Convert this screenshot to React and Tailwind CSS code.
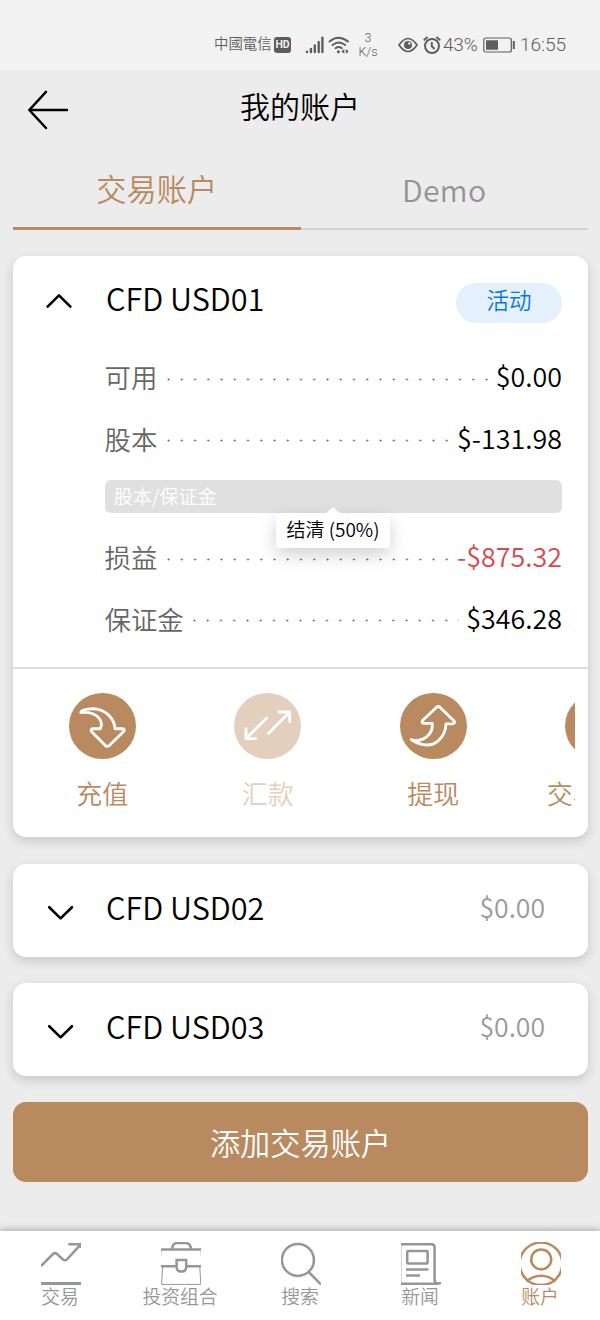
import React, { useState } from "react";

const rows = [
  { label: "可用", value: "$0.00", height: "h-[62px]" },
  { label: "股本", value: "$-131.98", height: "h-[61px]" },
];

const marginRows = [
  { label: "损益", value: "-$875.32", height: "h-[62px]", negative: true },
  { label: "保证金", value: "$346.28", height: "h-[61px]" },
];

const actions = [
  {
    label: "充值",
    icon: (
      <path d="M11.4 19.8C11.4 16.6 24 14.8 30 17C39 19.6 45.6 27 46.2 36.3H53.8Q56.6 36.6 55 39L40.4 53.4Q38.4 55 36.4 53.4L22.3 39Q21 36.6 23.5 36.3H31.2C34.6 29.5 30 18.5 11.4 19.8Z" />
    ),
  },
  {
    label: "汇款",
    disabled: true,
    icon: (
      <path d="M32.7 25.3L11.7 46.3M11.7 36.3V46.3H21.7M34.3 41L56 19.3M45 19.3H56V29.3" />
    ),
  },
  {
    label: "提现",
    icon: (
      <path d="M10.9 47.2C22 50.8 33.4 42.4 32.3 30.9H24Q20.6 30.4 22.4 28L36.6 14.4Q38.3 13 40 14.4L54.4 28.4Q56 30.8 52.8 31.3H46.2C45.8 45.2 34.4 56.6 19 51.4C15.4 50.2 12.6 48.8 10.9 47.2Z" />
    ),
  },
  {
    label: "交易记录",
    icon: <path d="M14 24H52M14 33H52M14 42H52" />,
  },
];

const navItems = [
  {
    label: "交易",
    icon: (
      <>
        <path d="M0 24L12 12Q14 10 16 12L22 17.5Q24 19.2 26 17.3L39.6 2.6" />
        <path d="M27.3 2.3H40V6" />
        <path d="M0 41.5H40" strokeWidth="3" />
      </>
    ),
  },
  {
    label: "投资组合",
    icon: (
      <>
        <path d="M11 7.5Q11.5 1 16 1H25Q29.5 1 30 7.5" />
        <path d="M0 7.5H40M0 24.2H15M25.5 24.2H40" />
        <path d="M15.6 18H25.2V24.5Q25.2 29.6 20.4 29.6Q15.6 29.6 15.6 24.5Z" />
        <path d="M1.6 25L.6 42.4H39.8L38.8 25" strokeWidth="1" />
        <path d="M.3 8V14M39.8 8V14" strokeWidth="0.4" />
      </>
    ),
  },
  {
    label: "搜索",
    icon: (
      <>
        <circle cx="16.9" cy="17.9" r="16" />
        <path d="M27.7 30L40 42.4" />
      </>
    ),
  },
  {
    label: "新闻",
    icon: (
      <>
        <path d="M0 2.3H30.5Q33.6 2.3 33.6 5.5V37.5Q33.6 41.6 37 41.6L40 41" />
        <path d="M0 41.7H37" />
        <rect x="6.2" y="9" width="20.4" height="12.4" rx="1" />
        <path d="M5 27.6H27.5M5 33.6H19" />
        <path d="M.3 2V42" strokeWidth="0.5" />
      </>
    ),
  },
  {
    label: "账户",
    icon: (
      <>
        <circle cx="20" cy="21.8" r="21.3" />
        <circle cx="20.2" cy="17.4" r="10" />
        <path d="M5.5 39.5Q12 33.8 20 33.8Q28 33.8 34.5 39.5" />
      </>
    ),
  },
];

const StatusBar = () => (
  <div className="h-[70px] bg-[#f2f2f2] pt-[19px] text-[#5e5e5e]">
    <div className="h-[51px] flex items-center pl-[214px] font-['Roboto','Noto_Sans_CJK_TC',sans-serif] font-[350]">
      <span className="w-[60px] shrink-0 text-[14.4px] whitespace-nowrap pt-px">
        中國電信
      </span>
      <span className="w-[17px] h-4 shrink-0 rounded-[3px] bg-[#5c5c5c] text-[#f2f2f2] text-[10.5px] font-bold flex items-center justify-center">
        HD
      </span>
      <svg
        className="ml-[14px] w-[19px] h-[18px] shrink-0"
        viewBox="0 0 19 18"
        stroke="currentColor"
        strokeWidth="2.4"
        strokeLinecap="round"
      >
        <path d="M2 15.6V16M5.9 13V16M9.8 9.5V16M13.7 6V16M17.4 1.8V16" />
      </svg>
      <svg
        className="ml-1 w-[22px] h-[18px] shrink-0"
        viewBox="0 0 22 18"
        fill="none"
        stroke="currentColor"
        strokeWidth="2"
        strokeLinecap="round"
      >
        <path d="M1.6 5.5Q10.5-2 20 5.5M4.6 9Q10.6 4 17.2 9M7.6 12.2Q10.6 9.8 13.8 12.2" />
        <circle cx="10.4" cy="15.7" r="1.5" fill="currentColor" stroke="none" />
        <path
          d="M13.3 15.4L16.3 13V17.8ZM20.8 15.4L17.8 13V17.8Z"
          fill="currentColor"
          stroke="none"
        />
      </svg>
      <span className="ml-[6px] w-[24px] shrink-0 text-center text-[12.5px] leading-[14px]">
        3<br />
        K/s
      </span>
      <svg
        className="ml-[18px] w-[20px] h-[16px] shrink-0"
        viewBox="0 0 20 16"
        fill="none"
        stroke="currentColor"
        strokeWidth="1.7"
      >
        <path d="M1 8Q10-5 19 8Q10 21 1 8Z" />
        <circle cx="10" cy="8" r="4" fill="currentColor" stroke="none" />
        <circle cx="11.4" cy="6.4" r="1.2" fill="#f2f2f2" stroke="none" />
      </svg>
      <svg
        className="ml-[5px] w-[18px] h-[18px] shrink-0"
        viewBox="0 0 18 18"
        fill="none"
        stroke="currentColor"
        strokeWidth="2"
      >
        <circle cx="9" cy="10" r="7" />
        <path d="M8.8 6V10.3L11.6 13" />
        <path d="M.8 4.2L4.6 1M17.2 4.2L13.4 1" />
      </svg>
      <span className="ml-0.5 w-[35px] shrink-0 text-[19px] leading-6 tracking-[-0.2px]">
        43%
      </span>
      <svg
        className="ml-[5px] w-[33px] h-[16px] shrink-0"
        viewBox="0 0 33 16"
        fill="none"
        stroke="currentColor"
      >
        <rect x=".8" y="1" width="27.5" height="14" rx="2" strokeWidth="1.2" />
        <path
          d="M3 3.2H15V12.8H3ZM29.8 4H31.8V12H29.8Z"
          fill="currentColor"
          stroke="none"
        />
      </svg>
      <span className="ml-1 text-[19px] leading-6">16:55</span>
    </div>
  </div>
);

const Chevron = ({ open }) => (
  <svg
    className="w-[28px] h-[16px] shrink-0"
    viewBox="0 0 28 16"
    fill="none"
    stroke="#000"
    strokeWidth="2.6"
    strokeLinecap="round"
    strokeLinejoin="round"
  >
    <path d={open ? "M2.6 13.6L14 2.4L25.4 13.6" : "M3.2 2.2L14.6 13.4L26 2.2"} />
  </svg>
);

const AmountRow = ({ label, value, height, negative }) => (
  <div className={`flex items-center text-[26.4px] ${height}`}>
    <span className="text-[#666] leading-10">{label}</span>
    <span className="flex-1 h-[3px] mt-1 ml-[9.5px] mr-[7px] bg-[radial-gradient(circle_at_1.5px_1.5px,#666_0.7px,transparent_1.3px)] bg-[length:13.25px_3px] bg-repeat-x" />
    <span
      className={`text-[26.8px] tracking-[0.05px] leading-10 -mt-[2px] ${
        negative ? "text-[#d5494f]" : "text-black"
      }`}
    >
      {value}
    </span>
  </div>
);

const CollapsedAccount = ({ name, amount }) => (
  <div className="h-[93px] rounded-[13px] bg-white shadow-[0_4px_11px_rgba(0,0,0,0.16)] flex items-center pl-[33px] pr-[43px]">
    <div className="pt-1">
      <Chevron />
    </div>
    <span className="ml-[32px] text-[30.7px] leading-10 -mt-[7px]">{name}</span>
    <span className="ml-auto text-[26.6px] leading-10 -mt-[7px] text-[#999]">
      {amount}
    </span>
  </div>
);

const App = () => {
  const [tab, setTab] = useState("live");
  const [activeNav, setActiveNav] = useState("账户");

  const tabClasses = (name) =>
    tab === name
      ? "text-[#b9895f] border-b-[3px] border-[#b9895f]"
      : "text-[#949494] border-b-2 border-[#d2d2d2]";

  return (
    <div className="w-[600px] h-[1320px] overflow-hidden flex flex-col bg-[#ececec] text-black font-['Noto_Sans_CJK_SC',sans-serif] font-[350]">
      <StatusBar />

      <header className="h-[80px] grid grid-cols-[100px_1fr_100px] items-center">
        <svg
          className="ml-[27px] w-[43px] h-[42px]"
          viewBox="0 0 43 42"
          fill="none"
          stroke="#000"
          strokeWidth="2.5"
          strokeLinecap="round"
          strokeLinejoin="round"
        >
          <path d="M19 2.8L2.3 21L19 39M2.3 21H40" />
        </svg>
        <h1 className="text-center text-[30px] leading-10 font-[350] -mt-[11px]">
          我的账户
        </h1>
      </header>

      <div className="mx-3 ml-[13px] h-[80px] grid grid-cols-2 text-[30.2px] leading-[77px]">
        <button onClick={() => setTab("live")} className={tabClasses("live")}>
          交易账户
        </button>
        <button
          onClick={() => setTab("demo")}
          className={`tracking-[0.3px] ${tabClasses("demo")}`}
        >
          Demo
        </button>
      </div>

      <main className="flex-1 pl-[13px] pr-[12px] pt-[26px]">
        <section className="h-[581px] rounded-[13px] bg-white shadow-[0_4px_11px_rgba(0,0,0,0.16)]">
          <div className="h-[411px] pr-[26px] pt-[25px]">
            <div className="h-[40px] flex items-center pl-[32px]">
              <Chevron open />
              <span className="ml-[33px] text-[30.7px] leading-10 -mt-[6px]">
                CFD USD01
              </span>
              <span className="ml-auto mt-[3px] w-[106px] h-[40px] rounded-full bg-[#e4f1fd] text-[#0c78d3] text-[22.5px] leading-[32px] text-center">
                活动
              </span>
            </div>
            <div className="pl-[91.5px] pt-[25px]">
              {rows.map((row) => (
                <AmountRow key={row.label} {...row} />
              ))}
              <div className="relative mt-[11px] h-[33px] rounded-md bg-[#e0e0e0] pl-[9.5px] text-white text-[19px] leading-[32px]">
                股本/保证金
                <div className="absolute left-[171.5px] top-[33px] w-[114px] h-[35px] rounded-[3px] bg-white text-black text-center leading-[31px] whitespace-nowrap shadow-[0_7px_18px_rgba(0,0,0,0.18)]">
                  <span className="absolute left-[50px] -top-[6px] border-x-[7px] border-b-[6px] border-x-transparent border-b-white" />
                  结清 (50%)
                </div>
              </div>
              <div className="pt-[13px]">
                {marginRows.map((row) => (
                  <AmountRow key={row.label} {...row} />
                ))}
              </div>
            </div>
          </div>
          <div className="border-t-2 border-[#dedede] pt-[24px]">
            <div className="ml-[6.5px] mr-[13px] flex overflow-hidden">
              {actions.map(({ label, icon, disabled }) => (
                <button
                  key={label}
                  disabled={disabled}
                  className={`w-[165.5px] shrink-0 flex flex-col items-center text-[#b9895f] ${
                    disabled ? "opacity-40" : ""
                  }`}
                >
                  <svg
                    className="w-[67px] h-[66px] rounded-full bg-[#b9895f]"
                    viewBox="0 0 67 67"
                    fill="none"
                    stroke="#fff"
                    strokeWidth="2.9"
                    strokeLinecap="round"
                    strokeLinejoin="round"
                  >
                    {icon}
                  </svg>
                  <span className="mt-[14px] text-[26px] leading-10 whitespace-nowrap">
                    {label}
                  </span>
                </button>
              ))}
            </div>
          </div>
        </section>

        <div className="mt-[27px] flex flex-col gap-[26px]">
          <CollapsedAccount name="CFD USD02" amount="$0.00" />
          <CollapsedAccount name="CFD USD03" amount="$0.00" />
          <button className="h-[80px] rounded-[13px] bg-[#b9895f] text-white text-[30.2px] leading-[81px]">
            添加交易账户
          </button>
        </div>
      </main>

      <nav className="h-[89px] shrink-0 bg-white grid grid-cols-5 shadow-[0_-2px_6px_rgba(0,0,0,0.25)]">
        {navItems.map(({ label, icon }) => (
          <button
            key={label}
            onClick={() => setActiveNav(label)}
            className={`flex flex-col items-center pt-[11px] ${
              activeNav === label ? "text-[#b9895f]" : "text-[#969696]"
            }`}
          >
            <svg
              className="w-[40px] h-[43px] ml-px"
              viewBox="0 0 40 43"
              fill="none"
              stroke="currentColor"
              strokeWidth="2.5"
            >
              {icon}
            </svg>
            <span className="text-[18.8px] leading-[22px]">{label}</span>
          </button>
        ))}
      </nav>
    </div>
  );
};

export default App;
